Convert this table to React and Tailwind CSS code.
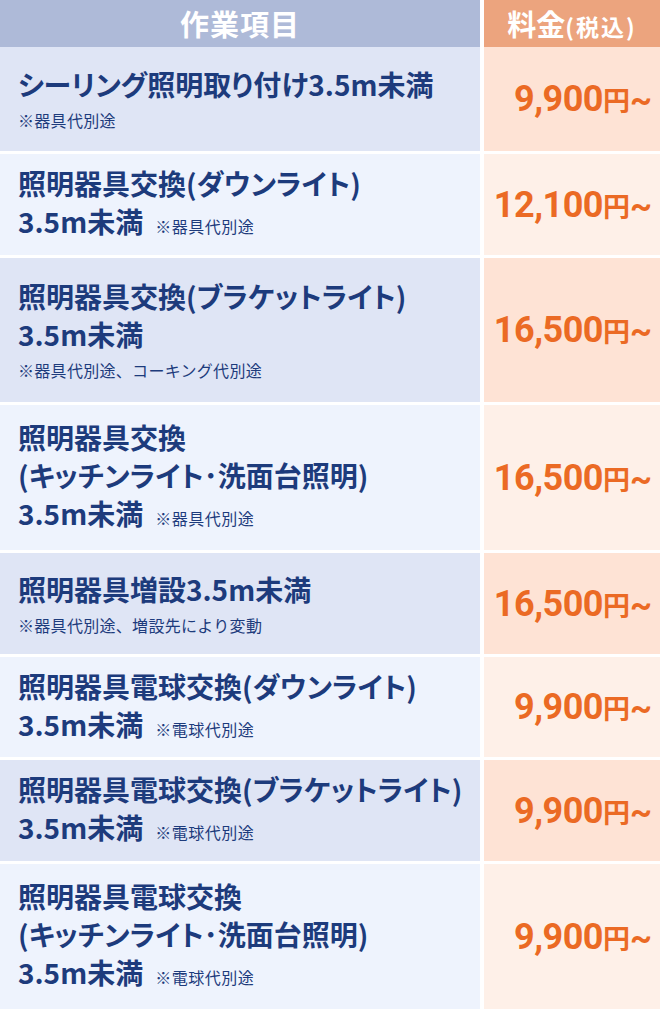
const rows = [
  { h: "h-[104px]", lines: ["シーリング照明取り付け3.5m未満"], note: "※器具代別途", price: "9,900" },
  { h: "h-[101px]", lines: ["照明器具交換(ダウンライト)", "3.5m未満"], inline: "※器具代別途", price: "12,100" },
  { h: "h-[144px]", lines: ["照明器具交換(ブラケットライト)", "3.5m未満"], note: "※器具代別途、コーキング代別途", price: "16,500" },
  { h: "h-[145px]", lines: ["照明器具交換", "(キッチンライト･洗面台照明)", "3.5m未満"], inline: "※器具代別途", price: "16,500" },
  { h: "h-[101px]", lines: ["照明器具増設3.5m未満"], note: "※器具代別途、増設先により変動", price: "16,500" },
  { h: "h-[100px]", lines: ["照明器具電球交換(ダウンライト)", "3.5m未満"], inline: "※電球代別途", price: "9,900" },
  { h: "h-[101px]", lines: ["照明器具電球交換(ブラケットライト)", "3.5m未満"], inline: "※電球代別途", price: "9,900" },
  { h: "h-[145px]", lines: ["照明器具電球交換", "(キッチンライト･洗面台照明)", "3.5m未満"], inline: "※電球代別途", price: "9,900" },
];

function Row({ row, odd }) {
  const last = row.lines.length - 1;
  return (
    <div className={`flex gap-1 ${row.h}`}>
      {/* 作業項目 */}
      <div className={`w-[480px] flex flex-col justify-center pl-[18px] ${odd ? "bg-[#dfe5f5]" : "bg-[#eef3fd]"}`}>
        {row.lines.map((line, i) => (
          <p key={i} className="text-[28px] leading-[38px] font-bold text-[#1d3b7c] whitespace-nowrap [font-feature-settings:'palt']">
            {line}
            {i === last && row.inline && (
              <span className="ml-3 text-[16px] font-normal tracking-[0.5px] [font-feature-settings:normal]">{row.inline}</span>
            )}
          </p>
        ))}
        {row.note && (
          <p className="mt-1 text-[16px] leading-[26px] text-[#1d3b7c] tracking-[0.3px]">{row.note}</p>
        )}
      </div>

      {/* 料金 */}
      <div className={`flex-1 flex items-center justify-end pr-[8px] ${odd ? "bg-[#fee3d5]" : "bg-[#fef0e8]"}`}>
        <p className="text-[#eb6a24] font-bold whitespace-nowrap leading-none">
          <span className="text-[36px] tracking-[-0.5px] font-['Roboto',sans-serif]">{row.price}</span>
          <span className="text-[27px]">円</span>
          <span className="text-[34px] font-['Roboto',sans-serif]">~</span>
        </p>
      </div>
    </div>
  );
}

export default function App() {
  return (
    <main className="w-[660px] bg-white font-['Noto_Sans_CJK_JP','Noto_Sans',sans-serif]">
      {/* ヘッダー */}
      <div className="flex gap-1 h-[47px]">
        <div className="w-[480px] bg-[#aebad8] flex items-center justify-center">
          <span className="text-white text-[29px] font-bold tracking-[1px]">作業項目</span>
        </div>
        <div className="flex-1 bg-[#eca47e] flex items-center justify-center">
          <span className="text-white text-[29px] font-bold">
            料金<span className="text-[23px] tracking-[2px]">(税込)</span>
          </span>
        </div>
      </div>

      <div className="flex flex-col gap-[3px]">
        {rows.map((row, i) => (
          <Row key={i} row={row} odd={i % 2 === 0} />
        ))}
      </div>
    </main>
  );
}
